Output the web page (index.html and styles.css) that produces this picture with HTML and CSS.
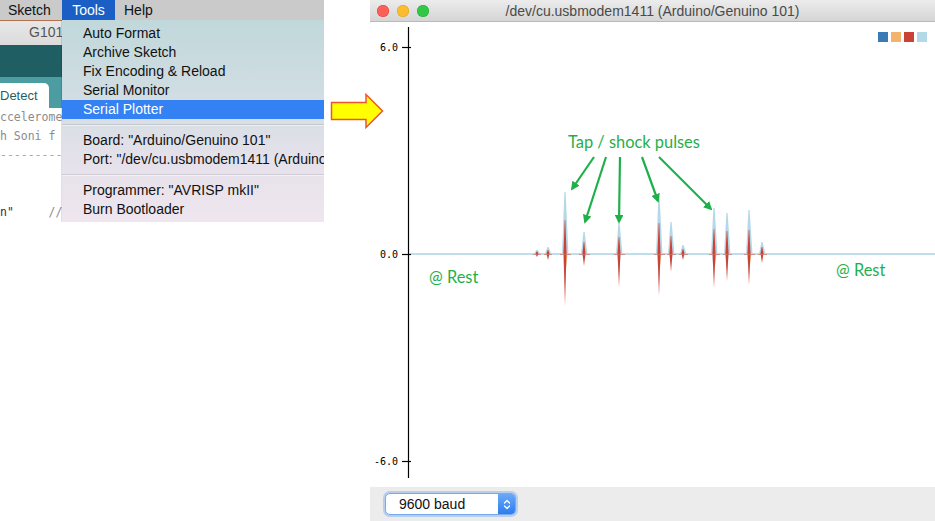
FILE: index.html
```html
<!DOCTYPE html>
<html>
<head>
<meta charset="utf-8">
<link rel="stylesheet" href="styles.css">
</head>
<body>
<div class="ide">
  <div class="menubar">
    <span class="mb mb-sketch">Sketch</span>
    <span class="mb mb-tools">Tools</span>
    <span class="mb mb-help">Help</span>
  </div>
  <div class="toolbar">G101</div>
  <div class="teal"></div>
  <div class="tabs"><div class="tab">Detect</div></div>
  <div class="editor">
    <div class="line">ccelerome</div>
    <div class="line">h Soni f</div>
    <div class="line dash">---------</div>
    <div class="line"></div>
    <div class="line"></div>
    <div class="line"><span class="str">n"</span>     //</div>
  </div>
  <div class="menu">
    <div class="mi">Auto Format</div>
    <div class="mi">Archive Sketch</div>
    <div class="mi">Fix Encoding &amp; Reload</div>
    <div class="mi">Serial Monitor</div>
    <div class="mi hl">Serial Plotter</div>
    <div class="sep"></div>
    <div class="mi">Board: "Arduino/Genuino 101"</div>
    <div class="mi">Port: "/dev/cu.usbmodem1411 (Arduino/Genuino 101)"</div>
    <div class="sep"></div>
    <div class="mi">Programmer: "AVRISP mkII"</div>
    <div class="mi">Burn Bootloader</div>
  </div>
</div>

<svg class="callout" width="56" height="38" viewBox="330 92 56 38">
  <polygon points="331.5,102.5 366,102.5 366,94.5 382.5,111 366,127.5 366,119.5 331.5,119.5" fill="#ffff00" stroke="#f0542c" stroke-width="1.5" stroke-linejoin="miter"/>
</svg>

<div class="window">
  <div class="titlebar">
    <div class="lights">
      <span class="light red"></span>
      <span class="light yellow"></span>
      <span class="light green"></span>
    </div>
    <div class="title">/dev/cu.usbmodem1411 (Arduino/Genuino 101)</div>
    <div></div>
  </div>
  <div class="plot">
    <svg width="565" height="465" viewBox="370 22 565 465">
      <defs>
        <polygon id="bu" points="-3,0 -0.6,-1 0.6,-1 3.5,0" fill="#b5d8e9"/>
        <polygon id="bd" points="-2,0 0,1 2,0" fill="#b5d8e9" opacity="0.75"/>
        <polygon id="ru" points="-1.6,0 -0.3,-1 0.3,-1 1.6,0" fill="#cc4235"/>
        <polygon id="rd" points="-1.4,0 0,1 1.4,0" fill="#cc4235"/>
        <polygon id="od" points="-0.5,0 1,1 2.5,0" fill="#f2a860" opacity="0.8"/>
        <marker id="ah" viewBox="0 0 10 10" refX="8" refY="5" markerWidth="4" markerHeight="4" orient="auto">
          <path d="M0,0 L10,5 L0,10 z" fill="#1fb04b"/>
        </marker>
      </defs>

      <!-- legend -->
      <rect x="878" y="32" width="10" height="10" fill="#3a7bb5"/>
      <rect x="891" y="32" width="10" height="10" fill="#f4b36d"/>
      <rect x="904" y="32" width="10" height="10" fill="#cb4234"/>
      <rect x="917" y="32" width="10" height="10" fill="#b3d8e8"/>

      <!-- baseline -->
      <line x1="409" y1="254" x2="935" y2="254" stroke="#a9d3e6" stroke-width="1.3"/>

      <!-- axis -->
      <line x1="408.5" y1="27" x2="408.5" y2="478" stroke="#000" stroke-width="1.2"/>
      <line x1="402" y1="47.5" x2="411" y2="47.5" stroke="#000" stroke-width="1.2"/>
      <line x1="402" y1="254.5" x2="411" y2="254.5" stroke="#000" stroke-width="1.2"/>
      <line x1="402" y1="461.5" x2="411" y2="461.5" stroke="#000" stroke-width="1.2"/>
      <text class="tick" x="398" y="51">6.0</text>
      <text class="tick" x="398" y="258">0.0</text>
      <text class="tick" x="398" y="465">-6.0</text>

      <!-- spikes -->
      <g class="spk" transform="translate(537,254)"><use href="#bu" transform="scale(1,4)"/><use href="#ru" transform="scale(1,2.5)"/><use href="#rd" transform="scale(1,3)"/><line x1="-4" x2="4" y1="0.5" y2="0.5"/></g>
      <g class="spk" transform="translate(548,254)"><use href="#bu" transform="scale(1,7)"/><use href="#ru" transform="scale(1,4)"/><use href="#rd" transform="scale(1,6)"/><line x1="-4" x2="4" y1="0.5" y2="0.5"/></g>
      <g class="spk" transform="translate(565,254)"><use href="#bu" transform="scale(1,62)"/><use href="#bd" transform="scale(1,36)"/><use href="#od" transform="scale(1,14)"/><use href="#ru" transform="scale(1,34)"/><use href="#rd" transform="scale(1,52)"/><line x1="-5" x2="6" y1="0.5" y2="0.5"/></g>
      <g class="spk" transform="translate(584,254)"><use href="#bu" transform="scale(1,22)"/><use href="#bd" transform="scale(1,8)"/><use href="#ru" transform="scale(1,12)"/><use href="#rd" transform="scale(1,12)"/><line x1="-5" x2="6" y1="0.5" y2="0.5"/></g>
      <g class="spk" transform="translate(619,254)"><use href="#bu" transform="scale(1,31)"/><use href="#bd" transform="scale(1,22)"/><use href="#ru" transform="scale(1,17)"/><use href="#rd" transform="scale(1,33)"/><line x1="-5" x2="6" y1="0.5" y2="0.5"/></g>
      <g class="spk" transform="translate(659,254)"><use href="#bu" transform="scale(1,57)"/><use href="#bd" transform="scale(1,29)"/><use href="#od" transform="scale(1,12)"/><use href="#ru" transform="scale(1,31)"/><use href="#rd" transform="scale(1,42)"/><line x1="-5" x2="6" y1="0.5" y2="0.5"/></g>
      <g class="spk" transform="translate(671,254)"><use href="#bu" transform="scale(1,32)"/><use href="#bd" transform="scale(1,12)"/><use href="#ru" transform="scale(1,18)"/><use href="#rd" transform="scale(1,18)"/><line x1="-4" x2="5" y1="0.5" y2="0.5"/></g>
      <g class="spk" transform="translate(683,254)"><use href="#bu" transform="scale(1,9)"/><use href="#ru" transform="scale(1,5)"/><use href="#rd" transform="scale(1,6)"/><line x1="-4" x2="5" y1="0.5" y2="0.5"/></g>
      <g class="spk" transform="translate(714,254)"><use href="#bu" transform="scale(1,46)"/><use href="#bd" transform="scale(1,24)"/><use href="#od" transform="scale(1,12)"/><use href="#ru" transform="scale(1,25)"/><use href="#rd" transform="scale(1,34)"/><line x1="-5" x2="6" y1="0.5" y2="0.5"/></g>
      <g class="spk" transform="translate(727,254)"><use href="#bu" transform="scale(1,41)"/><use href="#bd" transform="scale(1,18)"/><use href="#ru" transform="scale(1,23)"/><use href="#rd" transform="scale(1,27)"/><line x1="-4" x2="5" y1="0.5" y2="0.5"/></g>
      <g class="spk" transform="translate(749,254)"><use href="#bu" transform="scale(1,44)"/><use href="#bd" transform="scale(1,21)"/><use href="#od" transform="scale(1,10)"/><use href="#ru" transform="scale(1,24)"/><use href="#rd" transform="scale(1,31)"/><line x1="-5" x2="6" y1="0.5" y2="0.5"/></g>
      <g class="spk" transform="translate(762,254)"><use href="#bu" transform="scale(1,12)"/><use href="#ru" transform="scale(1,7)"/><use href="#rd" transform="scale(1,9)"/><line x1="-4" x2="5" y1="0.5" y2="0.5"/></g>

      <!-- annotations -->
      <text class="ann" x="568" y="148">Tap / shock pulses</text>
      <text class="ann" x="429" y="283">@ Rest</text>
      <text class="ann" x="836" y="276">@ Rest</text>
      <g class="arrows">
        <line x1="594" y1="157" x2="572" y2="189"/>
        <line x1="606" y1="157" x2="585" y2="222"/>
        <line x1="620" y1="157" x2="619" y2="222"/>
        <line x1="642" y1="157" x2="658" y2="201"/>
        <line x1="659" y1="157" x2="711" y2="209"/>
      </g>
    </svg>
  </div>
  <div class="footer">
    <div class="select">
      <span class="sel-text">9600 baud</span>
      <span class="stepper">
        <svg width="8" height="13" viewBox="0 0 8 13"><path d="M1.5,5 L4,2.5 L6.5,5 M1.5,8 L4,10.5 L6.5,8" fill="none" stroke="#fff" stroke-width="1.3" stroke-linecap="round" stroke-linejoin="round"/></svg>
      </span>
    </div>
  </div>
</div>
</body>
</html>
```

FILE: styles.css
```css
* { box-sizing: border-box; }

body {
  margin: 0;
  width: 935px;
  height: 521px;
  overflow: hidden;
  display: flex;
  align-items: flex-start;
  background: #fff;
  font-family: "Liberation Sans", Arial, sans-serif;
  position: relative;
}

/* ---------- Arduino IDE (left) ---------- */
.ide {
  width: 324px;
  flex: none;
  height: 222px;
  position: relative;
  overflow: hidden;
}

.menubar {
  height: 20px;
  background: #cacaca;
  display: flex;
  font-size: 14px;
  line-height: 20px;
  color: #111;
}
.mb-sketch { width: 62px; padding-left: 8px; }
.mb-tools { width: 53px; text-align: center; background: #1b5fc6; color: #fff; }
.mb-help { padding-left: 9px; }

.toolbar {
  height: 25px;
  border-top: 1px solid #b4704f;
  background: linear-gradient(#e7e7e7, #dbdbdb);
  font-size: 14px;
  line-height: 23px;
  color: #555;
  padding-left: 29px;
}

.teal { height: 32px; background: #1f5e63; }

.tabs {
  height: 31px;
  background: #4b9da1;
  padding-top: 6px;
}
.tab {
  width: 49px;
  height: 25px;
  background: #fff;
  border-top-right-radius: 5px;
  font-size: 13px;
  line-height: 25px;
  color: #1f5f63;
}

.editor {
  font-family: "DejaVu Sans Mono", monospace;
  font-size: 11.5px;
  color: #8c8c8c;
}
.line {
  height: 19px;
  line-height: 19px;
  white-space: pre;
}
.dash { color: #a8a8a8; }
.str { color: #333; }

.menu {
  position: absolute;
  left: 62px;
  top: 20px;
  width: 262px;
  height: 202px;
  padding: 4px 0 3px;
  background: linear-gradient(#c1d8db 0%, #cfdde2 35%, #e5e1ea 70%, #efe6ef 100%);
  box-shadow: -1px 0 0 rgba(0,0,0,0.12), 0 1px 0 #b9b9b9;
  overflow: hidden;
  font-size: 14px;
}
.mi {
  height: 19px;
  line-height: 19px;
  padding-left: 21px;
  white-space: nowrap;
  color: #111;
}
.mi.hl { background: #3381f2; color: #fff; }
.sep {
  height: 1px;
  margin: 5px 0 6px;
  background: rgba(0,0,0,0.1);
  box-shadow: 0 1px 0 rgba(255,255,255,0.5);
}

/* ---------- callout arrow ---------- */
.callout {
  position: absolute;
  left: 330px;
  top: 92px;
  z-index: 5;
}

/* ---------- Serial plotter window ---------- */
.window {
  margin-left: 46px;
  width: 565px;
  height: 521px;
  flex: none;
  display: flex;
  flex-direction: column;
}

.titlebar {
  height: 22px;
  flex: none;
  border-bottom: 1px solid #b9b9b9;
  background: linear-gradient(#ececec, #d5d5d5);
  display: grid;
  grid-template-columns: 1fr auto 1fr;
  align-items: center;
}
.lights { display: flex; gap: 8px; padding-left: 7px; }
.light { width: 12px; height: 12px; border-radius: 50%; }
.red { background: #fc5f57; box-shadow: inset 0 0 0 0.5px #e0443e; }
.yellow { background: #fdbc2e; box-shadow: inset 0 0 0 0.5px #dea123; }
.green { background: #33c748; box-shadow: inset 0 0 0 0.5px #27aa35; }
.title { font-size: 14px; color: #4a4a4a; }

.plot { height: 465px; flex: none; }
.plot svg { display: block; }

.tick {
  font-family: "DejaVu Sans Mono", monospace;
  font-size: 10px;
  fill: #000;
  text-anchor: end;
}

.spk line { stroke: #d27467; stroke-width: 1; opacity: 0.7; }

.ann {
  font-family: Lato, "Open Sans", sans-serif;
  font-size: 16.4px;
  fill: #1fb04b;
}
.arrows line {
  stroke: #1fb04b;
  stroke-width: 2.2;
  marker-end: url(#ah);
}

.footer {
  flex: 1;
  background: #ececec;
  padding: 6px 0 0 15px;
}
.select {
  width: 131px;
  height: 22px;
  display: flex;
  align-items: stretch;
  background: #fff;
  border: 1px solid #77a9ec;
  border-radius: 5px;
  box-shadow: 0 0 0 2px rgba(120, 170, 240, 0.45);
  overflow: hidden;
}
.sel-text {
  flex: 1;
  padding-left: 13px;
  font-size: 14px;
  line-height: 20px;
  color: #111;
}
.stepper {
  width: 17px;
  background: linear-gradient(#6aa9f9, #2c7df0);
  display: flex;
  align-items: center;
  justify-content: center;
}
```
